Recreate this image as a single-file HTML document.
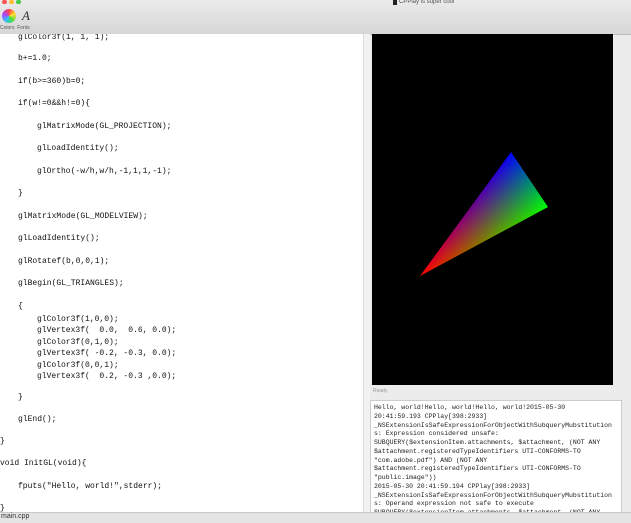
<!DOCTYPE html>
<html><head><style>
*{margin:0;padding:0}
body{width:631px;height:522px;overflow:hidden;position:relative;background:#ececec;font-family:"Liberation Mono",monospace}
#tb{position:absolute;left:0;top:0;width:631px;height:34px;background:linear-gradient(#ebebeb,#d6d6d6);border-bottom:1px solid #bdbdbd}
#ed{position:absolute;left:0;top:34px;width:363px;height:478px;background:#fff;overflow:hidden}
.l{position:absolute;font-size:8px;line-height:9px;white-space:pre;color:#111}
#sb{position:absolute;left:363px;top:34px;width:6px;height:478px;background:#f2f2f2;border-left:1px solid #ddd}
#gl{position:absolute;left:372px;top:34px;width:241px;height:351px;background:#000}
#con{position:absolute;left:370px;top:400px;width:250px;height:112px;background:#fff;border:1px solid #ccc;overflow:hidden}
#con pre{font-size:6.5px;line-height:8.75px;color:#222;padding:3px 0 0 3px;font-family:"Liberation Mono",monospace}
#bb{position:absolute;left:0;top:512px;width:631px;height:10px;background:#e4e4e4;border-top:1px solid #c8c8c8;font-family:"Liberation Sans",sans-serif;font-size:7px;color:#333}
</style></head><body>
<div id="tb">
<div style="position:absolute;left:2px;top:0;width:5px;height:4px;background:#f55;border-radius:3px"></div>
<div style="position:absolute;left:9px;top:0;width:5px;height:4px;background:#fb3;border-radius:3px"></div>
<div style="position:absolute;left:16px;top:0;width:5px;height:4px;background:#4c4;border-radius:3px"></div>
<div style="position:absolute;left:2px;top:9px;width:14px;height:14px;border-radius:50%;background:conic-gradient(#f44,#fd3,#4d4,#3bf,#a4f,#f44)"></div>
<div style="position:absolute;left:22px;top:8px;font:italic 13px 'Liberation Serif',serif;color:#333">A</div>
<div style="position:absolute;left:0;top:25px;font:5px 'Liberation Sans',sans-serif;color:#555">Colors&nbsp;&nbsp;Fonts</div>
<div style="position:absolute;left:393px;top:0;width:4px;height:5px;background:#222"></div>
<div style="position:absolute;left:399px;top:-1px;font:6px 'Liberation Sans',sans-serif;color:#555">CPPlay is super cool</div>
</div>
<div id="ed">
<div class="l" style="left:18px;top:-1px">glColor3f(1, 1, 1);</div>
<div class="l" style="left:18px;top:20px">b+=1.0;</div>
<div class="l" style="left:18px;top:43px">if(b&gt;=360)b=0;</div>
<div class="l" style="left:18px;top:65px">if(w!=0&amp;&amp;h!=0){</div>
<div class="l" style="left:37px;top:88px">glMatrixMode(GL_PROJECTION);</div>
<div class="l" style="left:37px;top:110px">glLoadIdentity();</div>
<div class="l" style="left:37px;top:133px">glOrtho(-w/h,w/h,-1,1,1,-1);</div>
<div class="l" style="left:18px;top:155px">}</div>
<div class="l" style="left:18px;top:178px">glMatrixMode(GL_MODELVIEW);</div>
<div class="l" style="left:18px;top:200px">glLoadIdentity();</div>
<div class="l" style="left:18px;top:223px">glRotatef(b,0,0,1);</div>
<div class="l" style="left:18px;top:245px">glBegin(GL_TRIANGLES);</div>
<div class="l" style="left:18px;top:268px">{</div>
<div class="l" style="left:37px;top:280px;line-height:11.4px">glColor3f(1,0,0);
glVertex3f(  0.0,  0.6, 0.0);
glColor3f(0,1,0);
glVertex3f( -0.2, -0.3, 0.0);
glColor3f(0,0,1);
glVertex3f(  0.2, -0.3 ,0.0);</div>
<div class="l" style="left:18px;top:359px">}</div>
<div class="l" style="left:18px;top:381px">glEnd();</div>
<div class="l" style="left:0;top:403px">}</div>
<div class="l" style="left:0;top:425px">void InitGL(void){</div>
<div class="l" style="left:18px;top:448px">fputs("Hello, world!",stderr);</div>
<div class="l" style="left:0;top:470px">}</div>
</div>
<div id="sb"></div>
<div id="gl">
<svg width="241" height="351">
<defs>
<linearGradient id="ga" x1="139" y1="118" x2="170.3" y2="176.1" gradientUnits="userSpaceOnUse"><stop offset="0" stop-color="#00f"/><stop offset="1" stop-color="#000"/></linearGradient>
<linearGradient id="gb" x1="176" y1="173" x2="125.7" y2="136.1" gradientUnits="userSpaceOnUse"><stop offset="0" stop-color="#0f0"/><stop offset="1" stop-color="#000"/></linearGradient>
<linearGradient id="gc" x1="48" y1="242" x2="168.1" y2="161.2" gradientUnits="userSpaceOnUse"><stop offset="0" stop-color="#f00"/><stop offset="1" stop-color="#000"/></linearGradient>
</defs>
<polygon points="139,118 176,173 48,242" fill="url(#ga)"/>
<polygon points="139,118 176,173 48,242" fill="url(#gb)" style="mix-blend-mode:screen"/>
<polygon points="139,118 176,173 48,242" fill="url(#gc)" style="mix-blend-mode:screen"/>
</svg>
</div>
<div style="position:absolute;left:373px;top:388px;font:5px 'Liberation Sans',sans-serif;color:#999">Ready</div>
<div id="con"><pre>Hello, world!Hello, world!Hello, world!2015-05-30
20:41:59.193 CPPlay[398:2933]
_NSExtensionIsSafeExpressionForObjectWithSubqueryMubstitution
s: Expression considered unsafe:
SUBQUERY($extensionItem.attachments, $attachment, (NOT ANY
$attachment.registeredTypeIdentifiers UTI-CONFORMS-TO
"com.adobe.pdf") AND (NOT ANY
$attachment.registeredTypeIdentifiers UTI-CONFORMS-TO
"public.image"))
2015-05-30 20:41:59.194 CPPlay[398:2933]
_NSExtensionIsSafeExpressionForObjectWithSubqueryMubstitution
s: Operand expression not safe to execute
SUBQUERY($extensionItem.attachments, $attachment, (NOT ANY</pre></div>
<div id="bb"><span style="position:absolute;left:1px;top:0">main.cpp</span></div>
</body></html>
